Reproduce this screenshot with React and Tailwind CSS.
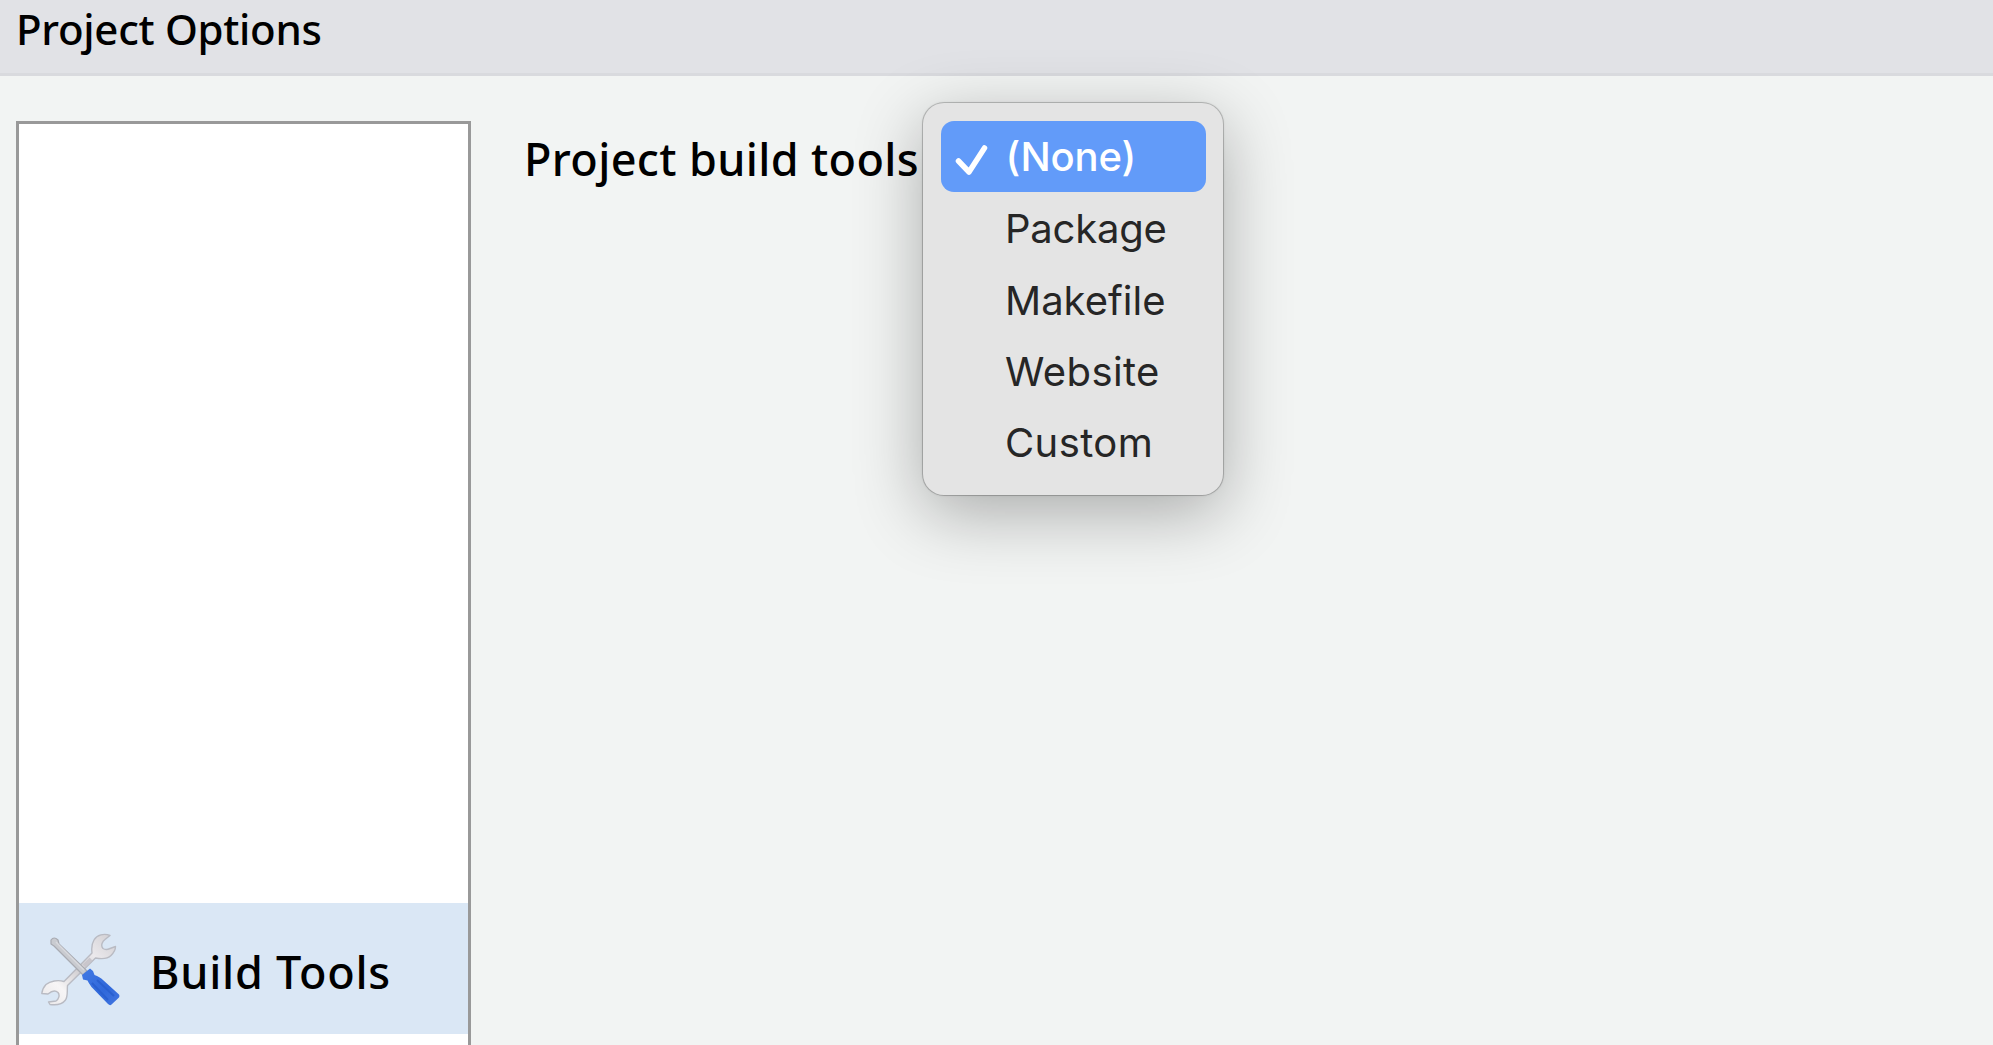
const options = [
  { label: "Package", tracking: "tracking-[-0.2px]" },
  { label: "Makefile", tracking: "tracking-normal" },
  { label: "Website", tracking: "tracking-[0.4px]" },
  { label: "Custom", tracking: "tracking-[0.4px]" },
];

function ToolsIcon() {
  return (
    <svg viewBox="0 0 80 74" className="block h-[74px] w-[80px] shrink-0">
      <defs>
        <linearGradient id="steel" x1="0" y1="1" x2="1" y2="0">
          <stop offset="0" stopColor="#e9e7e8" />
          <stop offset="0.25" stopColor="#f7f5f6" />
          <stop offset="0.5" stopColor="#d0ced1" />
          <stop offset="0.7" stopColor="#ebe9ec" />
          <stop offset="1" stopColor="#cfcdd1" />
        </linearGradient>
        <linearGradient id="handle" x1="0" y1="0" x2="1" y2="1">
          <stop offset="0" stopColor="#4179e4" />
          <stop offset="0.6" stopColor="#3068da" />
          <stop offset="1" stopColor="#4276e0" />
        </linearGradient>
      </defs>
      <path
        d="M69 2.500C63 0 56 2 53 7C50.500 11 50.500 16 51 20L23 48.500C17 46.500 9 48 5 51.500Q1.500 55 .8 60.500L7 61Q13 56 17 59.500C19 62 18 66 15 68L7.500 69L9 71.500Q20 73 24.500 67C27 63 26 59 26.500 52.500L54.500 25C60 26 66 26.500 70 22.500Q74.500 18 74.500 13.500L69 15.500Q65 17.500 62 15.500C59 12 62 8 64 6.500Z"
        fill="url(#steel)"
        stroke="#b9bbc3"
        strokeWidth="1.400"
        strokeLinejoin="round"
      />
      <path d="M43 33L50 26" stroke="#c9c6cc" strokeWidth="4" fill="none" />
      <path d="M10 7Q13 3 17 7L18 11L46 38L42 42L13 13L10 11Z" fill="#c9cbd0" stroke="#a9abb2" strokeWidth="1.200" strokeLinejoin="round" />
      <path d="M15 9L43 37" stroke="#d9dadd" strokeWidth="1.500" />
      <path d="M41 42L49 35.500L52 38L53.500 42C57 43 60 45 62 47L78 61.500Q79 63 78 64.500L70.500 71.500Q69 73 67 71L50.500 54C48.500 51 47.500 49.500 46.500 47.500L42 46.500Z" fill="url(#handle)" />
      <path d="M56 47L73 63M51 50L67 67" stroke="#2a60d0" strokeWidth="2" fill="none" />
    </svg>
  );
}

function BuildToolsMenu() {
  return (
    <div
      role="listbox"
      className="absolute left-[923px] top-[103px] flex h-[392px] w-[300px] flex-col rounded-[21px] bg-[#e4e4e4] px-[17.500px] pt-[17.500px] font-['Inter',sans-serif] text-[40px] font-normal leading-[71.300px] text-[#262626] shadow-[0_0_0_1px_rgba(0,0,0,0.18),0_0_3px_rgba(0,0,0,0.15),0_18px_68px_rgba(0,0,0,0.3)]"
    >
      <div role="option" aria-selected="true" className="flex h-[71.300px] shrink-0 items-center rounded-[13px] bg-[#629bf9] text-white">
        <svg viewBox="0 0 66 71" className="h-[71px] w-[66px] shrink-0" fill="none" stroke="white" strokeWidth="5.500" strokeLinecap="round" strokeLinejoin="round">
          <path d="M17.500 40L28 51L43.500 27" />
        </svg>
        <span className="relative -left-px font-medium tracking-[-0.1px]">(None)</span>
      </div>
      {options.map((option) => (
        <div key={option.label} role="option" aria-selected="false" className="h-[71.300px] shrink-0 pl-[64.500px] pt-[1.500px]">
          <span className={option.tracking}>{option.label}</span>
        </div>
      ))}
    </div>
  );
}

export default function App() {
  return (
    <div className="relative flex h-[1045px] w-[1993px] flex-col overflow-hidden bg-[#f2f4f3] font-['Noto_Sans',sans-serif] font-medium text-black">
      <header className="h-[76px] shrink-0 border-b-[3px] border-[#d9dade] bg-[#e1e2e6] pl-4">
        <h1 className="text-[42px] font-medium leading-[58px] tracking-[-0.3px]">Project Options</h1>
      </header>
      <main className="flex min-h-0 flex-1">
        <aside className="ml-4 mt-[45px] h-[1000px] w-[455px] shrink-0 border-[3px] border-[#999999] bg-white pt-[779px]">
          <div className="flex h-[131px] items-center bg-[#dae7f5] pl-[22px]">
            <div className="pt-[2px]">
              <ToolsIcon />
            </div>
            <span className="ml-[29px] pt-[6px] text-[45px] tracking-[0.750px]">Build Tools</span>
          </div>
        </aside>
        <div className="pl-[53px] pt-[53px]">
          <label className="block whitespace-nowrap text-[45px] leading-[59px] tracking-[0.350px]">Project build tools</label>
        </div>
      </main>
      <BuildToolsMenu />
    </div>
  );
}
